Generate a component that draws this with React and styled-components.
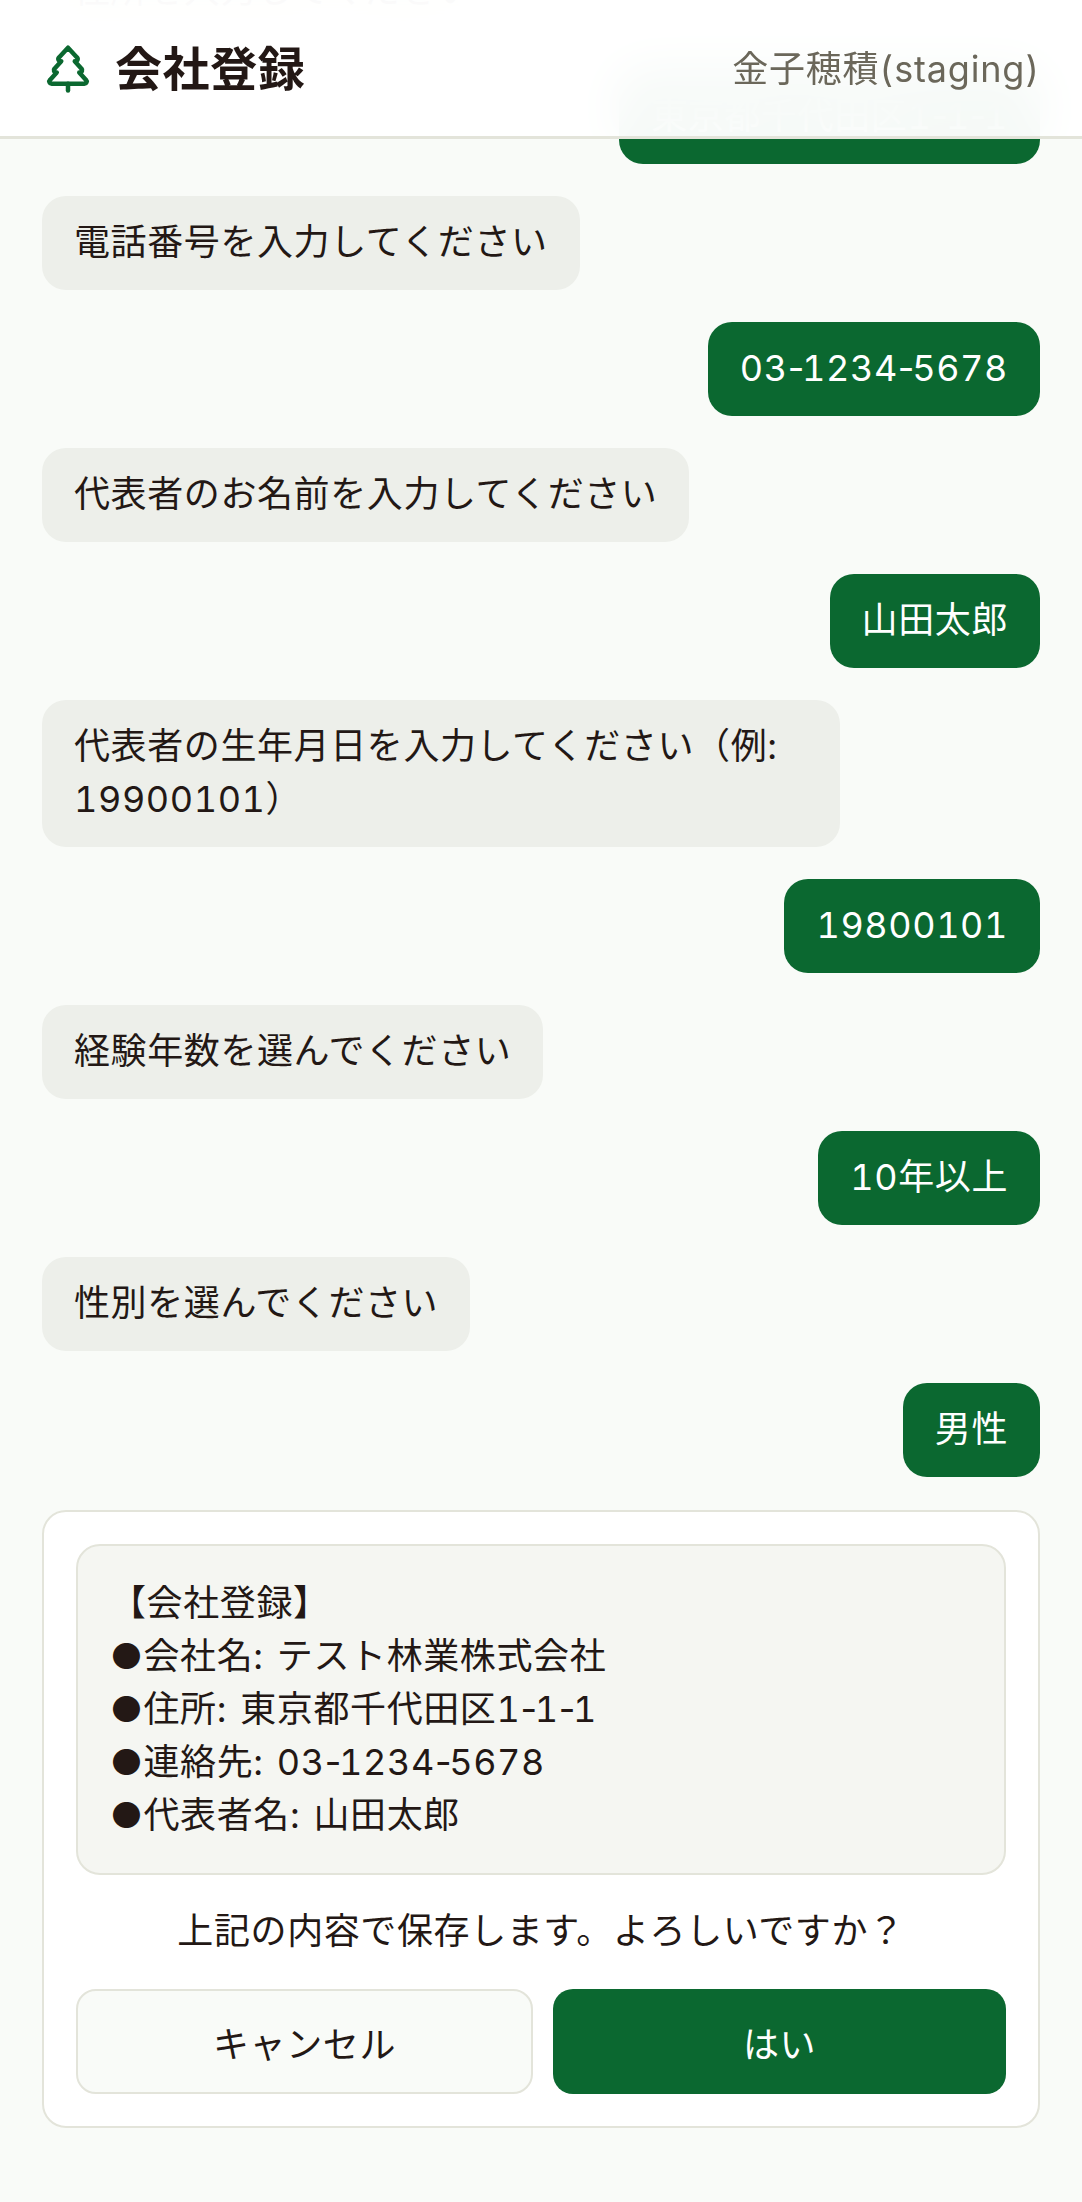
import styled, { createGlobalStyle } from "styled-components";
import { TreePine } from "lucide-react";

const GlobalStyle = createGlobalStyle`
  * {
    box-sizing: border-box;
  }
  body {
    margin: 0;
    background: #f9fbf8;
    color: #231815;
    font-family: "Inter", "Noto Sans CJK JP", sans-serif;
    font-variant-numeric: tabular-nums;
    letter-spacing: 0.6px;
  }
`;

const Page = styled.div`
  position: relative;
  height: 2202px;
  overflow: hidden;
`;

const Header = styled.header`
  position: absolute;
  top: 0;
  left: 0;
  right: 0;
  z-index: 10;
  height: 139px;
  padding: 0 42px 0 41px;
  display: flex;
  align-items: center;
  justify-content: space-between;
  border-bottom: 3px solid #e3e4da;
  background: rgba(255, 255, 255, 0.96);
  backdrop-filter: blur(24px);
`;

const Brand = styled.div`
  display: flex;
  align-items: center;
  gap: 20px;
  color: #0b6830;
`;

const Title = styled.h1`
  margin: 0 0 5px;
  font-size: 47px;
  font-weight: 700;
  color: #231815;
`;

const UserName = styled.span`
  margin-bottom: 5px;
  font-size: 36px;
  letter-spacing: 0.8px;
  color: #6b675a;
`;

const Chat = styled.main`
  height: 100%;
  padding: 0 42px 74px;
  display: flex;
  flex-direction: column;
  justify-content: flex-end;
  gap: 32px;
`;

const Bubble = styled.div`
  flex: none;
  align-self: ${(p) => (p.$user ? "flex-end" : "flex-start")};
  max-width: 80%;
  padding: 20px 32px 21px;
  border-radius: 24px;
  font-size: 36px;
  line-height: 53px;
  background: ${(p) => (p.$user ? "#0b6830" : "#edefea")};
  color: ${(p) => (p.$user ? "#fff" : "#231815")};
`;

const Card = styled.section`
  flex: none;
  margin-top: 1px;
  padding: 32px;
  background: #fff;
  border: 2px solid #e3e4da;
  border-radius: 24px;
`;

const Summary = styled.div`
  padding: 31px 32px;
  background: #f5f6f2;
  border: 2px solid #e3e4da;
  border-radius: 24px;
  font-size: 36px;
  line-height: 53px;
  word-spacing: 3px;
`;

const Prompt = styled.p`
  margin: 30px 0 31px;
  text-align: center;
  font-size: 36px;
  line-height: 53px;
`;

const Actions = styled.div`
  display: flex;
  gap: 20px;
`;

const ActionButton = styled.button`
  flex: 1;
  height: 105px;
  padding: 0;
  font-family: inherit;
  font-size: 36px;
  letter-spacing: inherit;
  border-radius: 20px;
  border: ${(p) => (p.$primary ? "none" : "2px solid #e3e4da")};
  background: ${(p) => (p.$primary ? "#0b6830" : "#f9fbf8")};
  color: ${(p) => (p.$primary ? "#fff" : "#231815")};
`;

// tabular figures also widen the hyphen, so it gets its own span
const Dash = styled.span`
  font-variant-numeric: normal;
  letter-spacing: -2.2px;
`;

const withDashes = (text) =>
  text.split("-").flatMap((part, i) => (i === 0 ? [part] : [<Dash key={i}>-</Dash>, part]));

const messages = [
  { text: "住所を入力してください" },
  { text: "東京都千代田区1-1-1", user: true },
  { text: "電話番号を入力してください" },
  { text: "03-1234-5678", user: true },
  { text: "代表者のお名前を入力してください" },
  { text: "山田太郎", user: true },
  { text: "代表者の生年月日を入力してください（例: 19900101）" },
  { text: "19800101", user: true },
  { text: "経験年数を選んでください" },
  { text: "10年以上", user: true },
  { text: "性別を選んでください" },
  { text: "男性", user: true },
];

const summary = [
  "【会社登録】",
  "●会社名: テスト林業株式会社",
  "●住所: 東京都千代田区1-1-1",
  "●連絡先: 03-1234-5678",
  "●代表者名: 山田太郎",
];

export default function App() {
  return (
    <Page>
      <GlobalStyle />
      <Header>
        <Brand>
          <TreePine size={54} strokeWidth={2} />
          <Title>会社登録</Title>
        </Brand>
        <UserName>金子穂積(staging)</UserName>
      </Header>
      <Chat>
        {messages.map((m, i) => (
          <Bubble key={i} $user={m.user}>
            {withDashes(m.text)}
          </Bubble>
        ))}
        <Card>
          <Summary>
            {summary.map((line, i) => (
              <div key={i}>{withDashes(line)}</div>
            ))}
          </Summary>
          <Prompt>上記の内容で保存します。よろしいですか？</Prompt>
          <Actions>
            <ActionButton>キャンセル</ActionButton>
            <ActionButton $primary>はい</ActionButton>
          </Actions>
        </Card>
      </Chat>
    </Page>
  );
}
